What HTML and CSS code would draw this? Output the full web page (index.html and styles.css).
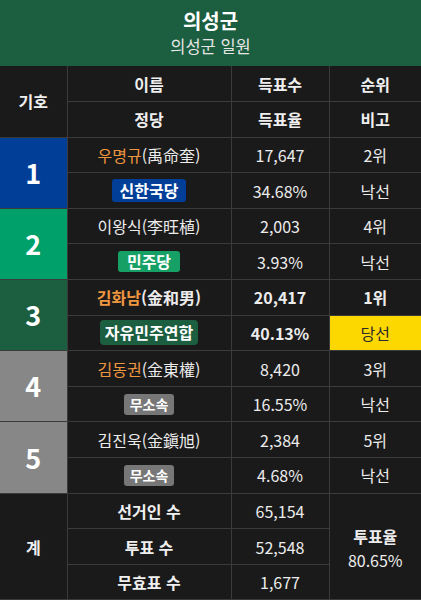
FILE: index.html
```html
<!DOCTYPE html>
<html lang="ko">
<head>
<meta charset="utf-8">
<link rel="stylesheet" href="styles.css">
</head>
<body>
<div class="header">
  <div class="title">의성군</div>
  <div class="subtitle">의성군 일원</div>
</div>
<table class="results">
  <colgroup>
    <col class="c1"><col class="c2"><col class="c3"><col class="c4">
  </colgroup>
  <tr>
    <th rowspan="2">기호</th>
    <th>이름</th><th>득표수</th><th>순위</th>
  </tr>
  <tr>
    <th>정당</th><th>득표율</th><th>비고</th>
  </tr>

  <tr>
    <td rowspan="2" class="num blue">1</td>
    <td><span class="hl">우명규</span>(禹命奎)</td><td>17,647</td><td>2위</td>
  </tr>
  <tr>
    <td><span class="badge b-blue">신한국당</span></td><td>34.68%</td><td>낙선</td>
  </tr>

  <tr>
    <td rowspan="2" class="num green">2</td>
    <td>이왕식(李旺植)</td><td>2,003</td><td>4위</td>
  </tr>
  <tr>
    <td><span class="badge b-green">민주당</span></td><td>3.93%</td><td>낙선</td>
  </tr>

  <tr class="win">
    <td rowspan="2" class="num dgreen">3</td>
    <td><span class="hl">김화남</span>(金和男)</td><td>20,417</td><td>1위</td>
  </tr>
  <tr class="win">
    <td><span class="badge b-dgreen">자유민주연합</span></td><td>40.13%</td><td class="elected">당선</td>
  </tr>

  <tr>
    <td rowspan="2" class="num gray">4</td>
    <td><span class="hl">김동권</span>(金東權)</td><td>8,420</td><td>3위</td>
  </tr>
  <tr>
    <td><span class="badge b-gray">무소속</span></td><td>16.55%</td><td>낙선</td>
  </tr>

  <tr>
    <td rowspan="2" class="num gray">5</td>
    <td>김진욱(金鎭旭)</td><td>2,384</td><td>5위</td>
  </tr>
  <tr>
    <td><span class="badge b-gray">무소속</span></td><td>4.68%</td><td>낙선</td>
  </tr>

  <tr>
    <th rowspan="3" class="total">계</th>
    <th class="sub">선거인 수</th><td>65,154</td>
    <td rowspan="3" class="turnout">
      <div class="t-label">투표율</div>
      <div class="t-value">80.65%</div>
    </td>
  </tr>
  <tr>
    <th class="sub">투표 수</th><td>52,548</td>
  </tr>
  <tr>
    <th class="sub">무효표 수</th><td>1,677</td>
  </tr>
</table>
</body>
</html>
```

FILE: styles.css
```css
html, body {
  margin: 0;
  padding: 0;
  background: #1b1a1a;
}
body {
  font-family: "Noto Sans CJK KR", "Noto Sans", sans-serif;
  color: #ececec;
  width: 421px;
}
.header {
  background: #1c5e40;
  height: 66px;
  display: flex;
  flex-direction: column;
  align-items: center;
  justify-content: center;
  color: #fff;
}
.title {
  font-size: 20px;
  font-weight: 700;
  line-height: 26px;
  margin-top: -1px;
}
.subtitle {
  font-size: 16.5px;
  line-height: 22px;
  color: #e6e6e6;
  margin-top: 1px;
}
.results {
  width: 421px;
  border-collapse: collapse;
  table-layout: fixed;
  font-size: 16px;
}
.c1 { width: 67px; }
.c2 { width: 164px; }
.c3 { width: 98px; }
.c4 { width: 92px; }
.results th,
.results td {
  border: 1px solid #3b3b3b;
  height: 35.6px;
  padding: 0;
  text-align: center;
  vertical-align: middle;
  line-height: 20px;
  box-sizing: border-box;
}
.results tr > :first-child { border-left: none; }
.results tr > :last-child { border-right: none; }
.results th {
  font-weight: 700;
  color: #efefef;
}
.results tr:first-child th { border-top: none; }
.num {
  font-size: 27px;
  font-weight: 700;
  color: #fff;
}
.blue { background: #003e98; }
.green { background: #00a06a; }
.dgreen { background: #1c5e40; }
.gray { background: #878787; }
.hl { color: #ee9640; }
.win td { font-weight: 700; }
.elected {
  background: #fdd800;
  color: #2a2a2a;
  font-weight: 400 !important;
}
.badge {
  display: inline-block;
  padding: 0 5px;
  border-radius: 3px;
  font-weight: 700;
  color: #fff;
  line-height: 23px;
  font-size: 16px;
}
.b-blue { background: #003e98; padding: 0 8px; }
.b-green { background: #17a066; padding: 0 9px; line-height: 21px; }
.b-dgreen { background: #1c5e40; padding: 1px 5px; border-radius: 4px; }
.b-gray { background: #777777; font-size: 14px; padding: 0 6px; line-height: 21px; }
.turnout {
  padding-top: 4px !important;
}
.t-label {
  font-weight: 700;
  line-height: 23px;
}
.t-value {
  line-height: 23px;
  margin-top: 1px;
}
```
